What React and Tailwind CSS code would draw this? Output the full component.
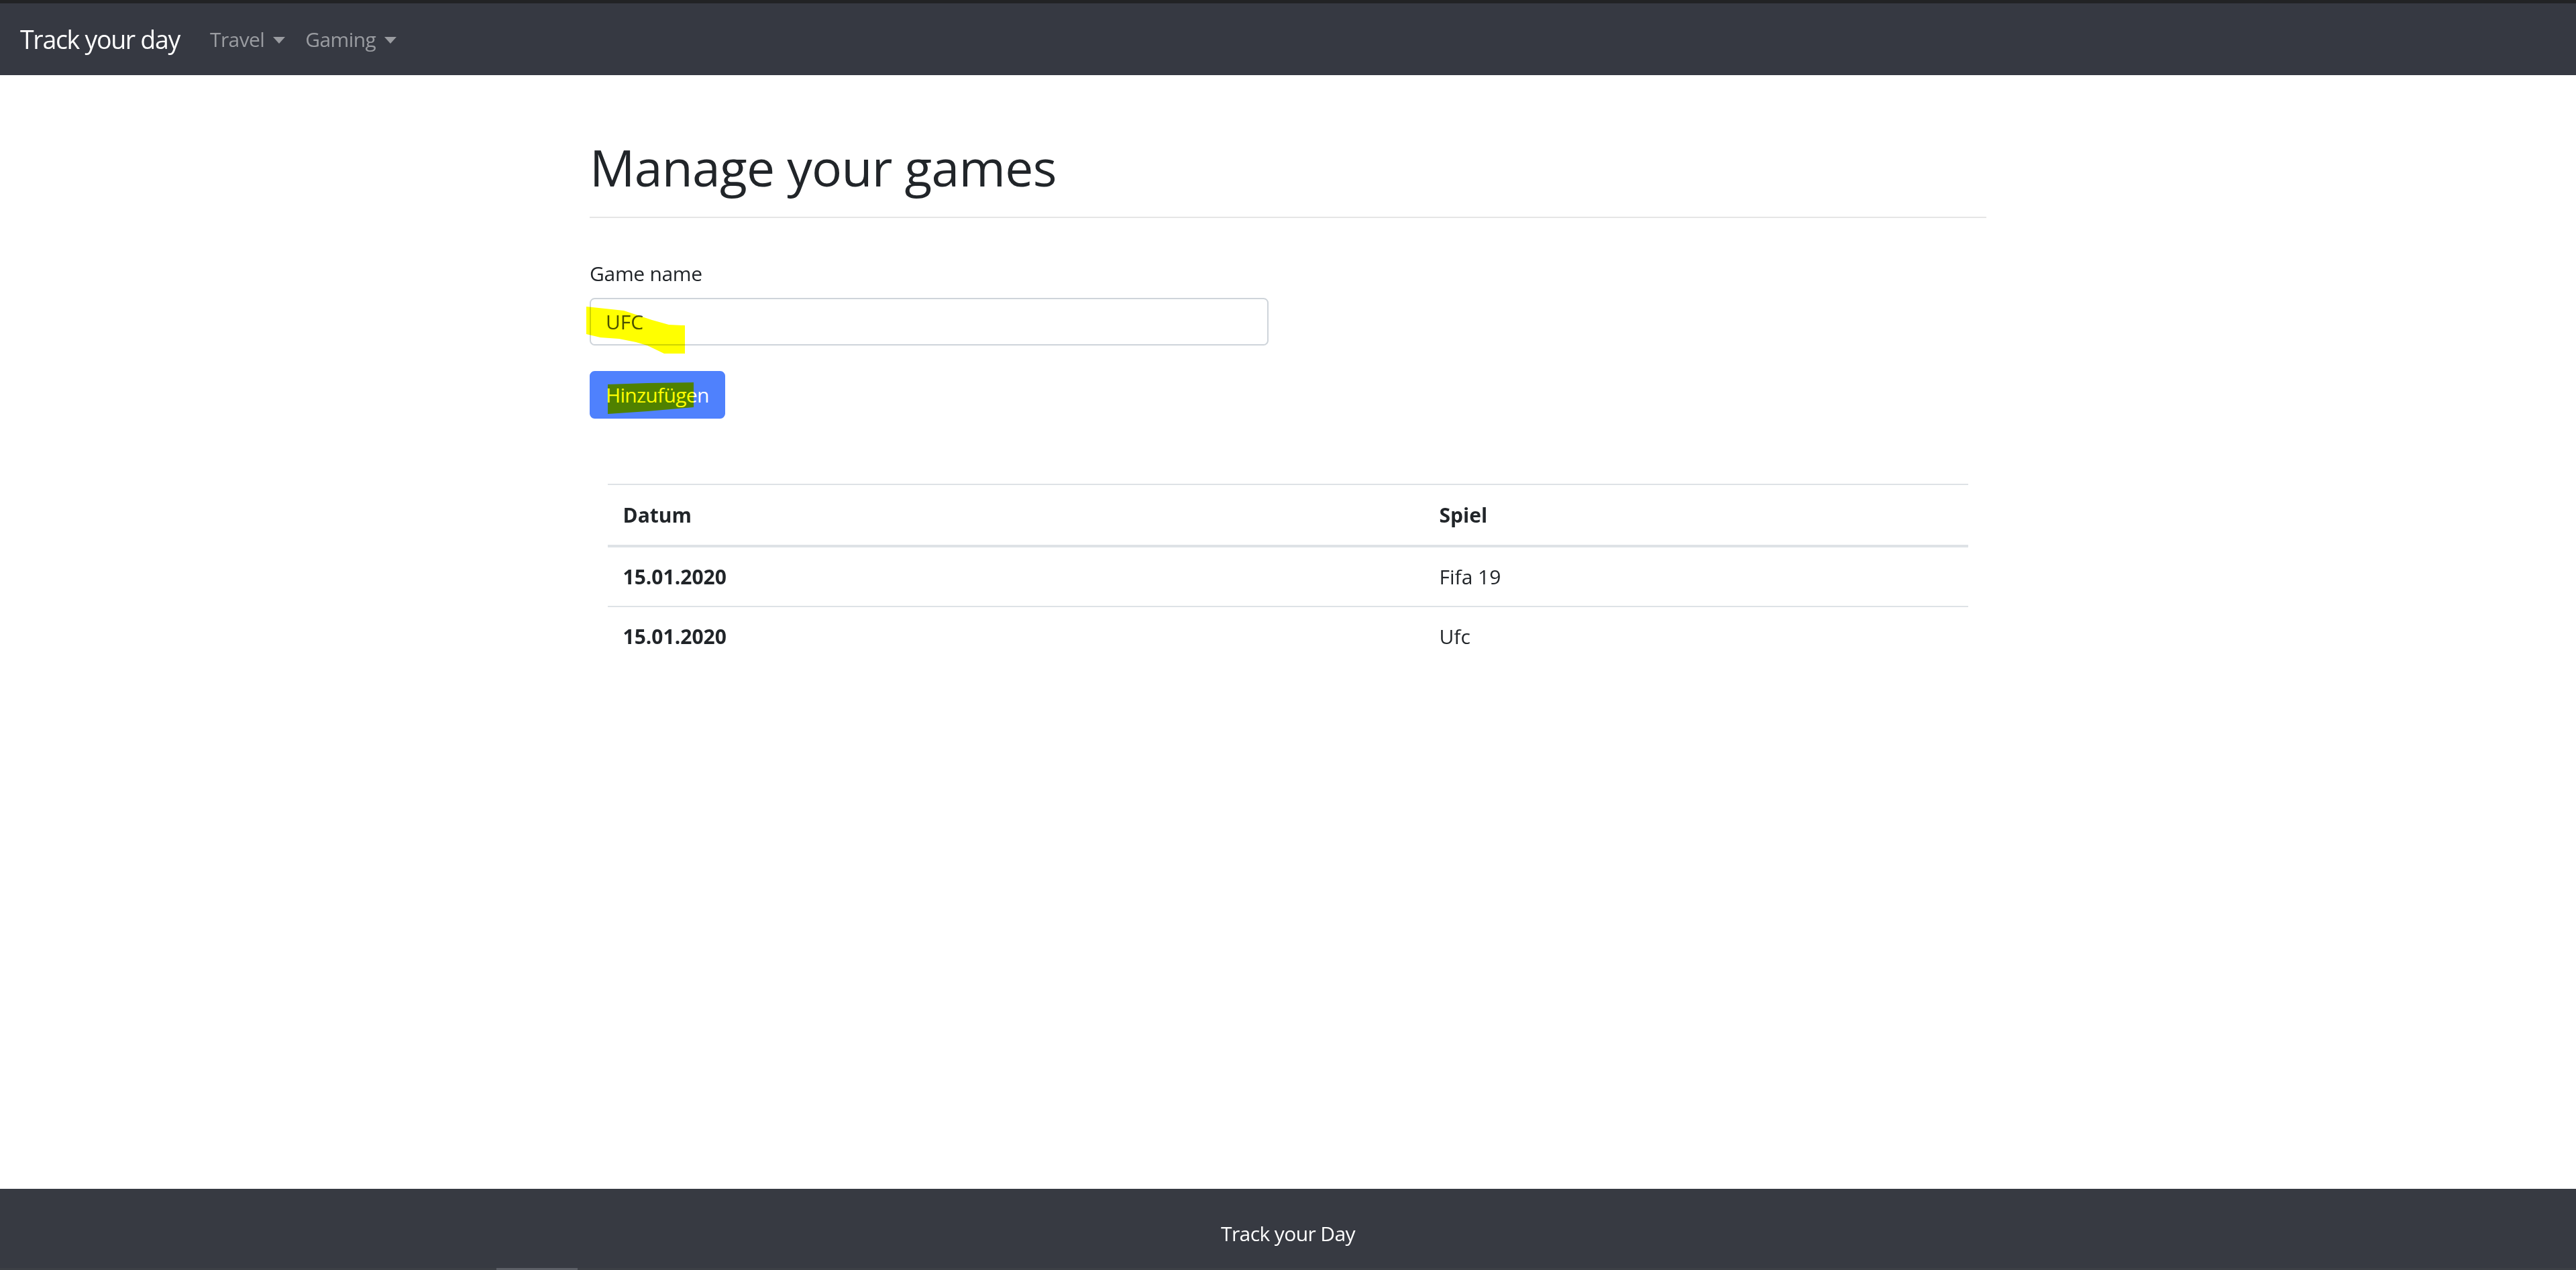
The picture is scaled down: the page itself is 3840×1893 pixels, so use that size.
import { useState } from 'react'

/**
 * Track your day - Gaming page
 * Seite zum Verwalten der gespielten Spiele
 */
const games = [
  { date: '15.01.2020', name: 'Fifa 19' },
  { date: '15.01.2020', name: 'Ufc' },
]

const NavDropdown = ({ label }) => (
  <a href="#" className="flex items-center px-[15px] leading-[45px] tracking-[-0.6px] text-[#9a9ca1]">
    {label}
    <span className="ml-[13px] mt-[3px] inline-block h-0 w-0 border-x-[9px] border-t-[10px] border-x-transparent border-t-[#9a9ca1]" />
  </a>
)

const App = () => {
  const [gameName, setGameName] = useState('UFC')

  return (
    <div className="flex h-screen flex-col bg-white font-['Open_Sans',sans-serif] text-[30px] text-[#212529]">
      <div className="h-[5px] bg-[#222325]" />
      <nav className="flex h-[107px] items-center bg-[#363942] px-[30px]">
        <a href="#" className="mr-[30px] text-[37.5px] leading-[56px] tracking-[-1.3px] text-white">
          Track your day
        </a>
        <NavDropdown label="Travel" />
        <NavDropdown label="Gaming" />
      </nav>

      <main className="flex-1">
        <div className="mx-auto w-[2082px]">
          <div className="mt-[92px] border-b-2 border-[#e6e6e6] pb-[29px]">
            <h1 className="text-[75px] font-normal leading-[90px] tracking-[-0.7px]">Manage your games</h1>
          </div>

          <form className="mt-[60px]" onSubmit={(e) => e.preventDefault()}>
            <label className="block leading-[45px] tracking-[-0.3px]">Game name</label>
            <div className="relative mt-[14px] w-[1012px]">
              <input
                value={gameName}
                onChange={(e) => setGameName(e.target.value)}
                className="h-[71px] w-full rounded-[7.5px] border-2 border-[#ced4da] px-[22px] text-[30px] text-[#495057] outline-none"
              />
              <svg
                className="pointer-events-none absolute left-[-5px] top-[13px] mix-blend-multiply"
                width="147"
                height="70"
                viewBox="0 0 147 70"
              >
                <path
                  d="M0 0 L28 3 L56 6 L77 13 L98 20 L123 27 L147 28 L147 70 L116 70 L91 58 L74 53 L49 48 L21 46 L0 41 Z"
                  fill="#ffff00"
                />
              </svg>
            </div>
            <div className="relative mt-[38px] inline-block">
              <button
                type="submit"
                className="h-[71px] rounded-[7.5px] border-2 border-[#4f81fd] bg-[#4f81fd] px-[22px] text-[30px] leading-[45px] tracking-[-0.7px] text-white"
              >
                Hinzufügen
              </button>
              <svg
                className="pointer-events-none absolute left-[27px] top-[17px] mix-blend-multiply"
                width="128"
                height="47"
                viewBox="0 0 128 47"
              >
                <path d="M0 3 L59 1 L128 0 L128 37 L59 43 L0 47 Z" fill="#ffff00" />
              </svg>
            </div>
          </form>

          <div className="mt-[97px] px-[27px]">
            <table className="w-full border-collapse text-left">
              <thead>
                <tr className="border-t-2 border-b-4 border-[#dee2e6]">
                  <th className="w-[1217px] px-[22.5px] py-[22px] font-bold leading-[45px]">Datum</th>
                  <th className="px-[22.5px] py-[22px] font-bold leading-[45px]">Spiel</th>
                </tr>
              </thead>
              <tbody>
                {games.map((game, index) => (
                  <tr key={index} className={index > 0 ? 'border-t-2 border-[#dee2e6]' : ''}>
                    <th className="px-[22.5px] py-[21px] font-bold leading-[45px]">{game.date}</th>
                    <td className="px-[22.5px] py-[21px] leading-[45px]">{game.name}</td>
                  </tr>
                ))}
              </tbody>
            </table>
          </div>
        </div>
      </main>

      <footer className="flex h-[118px] items-center justify-center bg-[#373a42] pt-[14px] tracking-[-0.6px] text-white">
        Track your Day
      </footer>
      <div className="flex h-[3px] bg-[#3c3f45]">
        <div className="ml-[740px] w-[121px] bg-[#5c5f66]" />
      </div>
    </div>
  )
}

export default App
